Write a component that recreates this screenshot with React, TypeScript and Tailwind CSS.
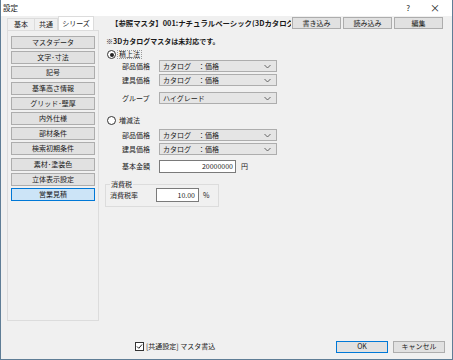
import React from "react";

const font = { fontFamily: '"Noto Sans CJK JP", "Noto Sans", sans-serif' };

const menus = [
  "マスタデータ",
  "文字･寸法",
  "記号",
  "基準高さ情報",
  "グリッド･壁厚",
  "内外仕様",
  "部材条件",
  "検索初期条件",
  "素材･塗装色",
  "立体表示設定",
  "営業見積",
];

const Chevron = () => (
  <svg width="7" height="5" viewBox="0 0 7 5" className="shrink-0">
    <path d="M0.5 1 L3.5 4 L6.5 1" fill="none" stroke="#555" strokeWidth="0.9" />
  </svg>
);

const Select = ({ value }: { value: string }) => (
  <div className="w-[118px] h-[12px] flex items-center justify-between border border-[#adadad] bg-[#e5e5e5] pl-[3px] pr-[5px]">
    <span className="leading-none">{value}</span>
    <Chevron />
  </div>
);

const Row = ({ label, children }: { label: string; children: React.ReactNode }) => (
  <div className="flex items-center">
    <span className="w-[54px] shrink-0 pl-[17px] leading-none">{label}</span>
    {children}
  </div>
);

const Radio = ({ checked, label, focus }: { checked?: boolean; label: string; focus?: boolean }) => (
  <div className="flex items-center gap-[2px] pl-[2px]">
    <span className="w-[9px] h-[9px] rounded-full border border-[#333] bg-white flex items-center justify-center">
      {checked && <span className="w-[4px] h-[4px] rounded-full bg-[#222]" />}
    </span>
    <span className={`leading-none px-[1px] ${focus ? "outline outline-1 outline-dotted outline-[#999]" : ""}`}>{label}</span>
  </div>
);

const Btn = ({ label, className = "" }: { label: string; className?: string }) => (
  <div className={`h-[12px] flex items-center justify-center border bg-[#e1e1e1] leading-none ${className}`}>{label}</div>
);

export default function App() {
  return (
    <div style={font} className="w-[453px] h-[360px] bg-[#f0f0f0] border-x border-b border-[#5f7d96] flex flex-col text-[7px] text-[#1a1a1a]">
      {/* title bar */}
      <div className="h-[16px] bg-white flex items-center pl-[2px] pr-[12px] shrink-0">
        <span className="text-[7.5px] leading-none">設定</span>
        <span className="ml-auto text-[8px] leading-none">?</span>
        <span className="ml-[20px] text-[10px] leading-none">×</span>
      </div>

      <div className="flex h-[305px] shrink-0">
        {/* left tab control */}
        <div className="ml-[6px] w-[92px] shrink-0 flex flex-col">
          <div className="h-[14px] flex items-end">
            <div className="h-[12px] w-[28px] flex items-center justify-center border border-b-0 border-[#dcdcdc] leading-none">基本</div>
            <div className="h-[12px] w-[23px] flex items-center justify-center border-t border-r border-[#dcdcdc] leading-none">共通</div>
            <div className="h-[14px] w-[36px] flex items-center justify-center bg-white border border-b-0 border-[#dcdcdc] leading-none">シリーズ</div>
          </div>
          <div className="h-[291px] border border-[#dcdcdc] px-[3px] pt-[5px] flex flex-col gap-[2.2px]">
            {menus.map((m, i) => (
              <div
                key={m}
                className={`h-[13px] flex items-center justify-center border leading-none ${
                  i === menus.length - 1 ? "bg-[#cce4f7] border-[#0078d7]" : "bg-[#e1e1e1] border-[#adadad]"
                }`}
              >
                {m}
              </div>
            ))}
          </div>
        </div>

        {/* right pane */}
        <div className="ml-[6px] flex-1 min-w-0 pr-[9px] flex flex-col">
          <div className="mt-[1px] h-[12px] flex items-center">
            <span className="flex-1 min-w-0 pl-[6px] overflow-hidden whitespace-nowrap font-bold text-[7.4px] leading-none">
              【参照マスタ】001:ナチュラルベーシック(3Dカタログ版)
            </span>
            <div className="flex gap-[2px] ml-[1px] shrink-0">
              <Btn label="書き込み" className="w-[49px] border-[#adadad]" />
              <Btn label="読み込み" className="w-[49px] border-[#adadad]" />
              <Btn label="編集" className="w-[49px] border-[#adadad]" />
            </div>
          </div>

          <div className="mt-[9px] pl-[1px] font-bold leading-none">※3Dカタログマスタは未対応です。</div>

          <div className="mt-[5px]">
            <Radio checked focus label="積上法" />
          </div>
          <div className="mt-[1px] flex flex-col gap-[2px]">
            <Row label="部品価格">
              <Select value="カタログ　：価格" />
            </Row>
            <Row label="建具価格">
              <Select value="カタログ　：価格" />
            </Row>
          </div>
          <div className="mt-[6px]">
            <Row label="グループ">
              <Select value="ハイグレード" />
            </Row>
          </div>

          <div className="mt-[12px]">
            <Radio label="増減法" />
          </div>
          <div className="mt-[4px] flex flex-col gap-[2px]">
            <Row label="部品価格">
              <Select value="カタログ　：価格" />
            </Row>
            <Row label="建具価格">
              <Select value="カタログ　：価格" />
            </Row>
          </div>
          <div className="mt-[5px]">
            <Row label="基本金額">
              <div className="w-[77px] h-[13px] border border-[#7a7a7a] bg-white flex items-center justify-end pr-[2px] leading-none">20000000</div>
              <span className="ml-[5px] leading-none">円</span>
            </Row>
          </div>

          <fieldset className="mt-[8px] w-[114px] border border-[#dcdcdc] px-[4px] pb-[4px] pt-[0px]">
            <legend className="px-[1px] leading-none">消費税</legend>
            <div className="flex items-center">
              <span className="w-[46px] leading-none">消費税率</span>
              <div className="w-[43px] h-[14px] border border-[#7a7a7a] bg-white flex items-center justify-end pr-[3px] leading-none">10.00</div>
              <span className="ml-[4px] leading-none">%</span>
            </div>
          </fieldset>
        </div>
      </div>

      {/* bottom bar */}
      <div className="mt-[20px] flex items-center h-[11px]">
        <div className="ml-[134px] flex items-center gap-[2px]">
          <span className="w-[9px] h-[9px] border border-[#333] bg-white flex items-center justify-center">
            <svg width="7" height="7" viewBox="0 0 7 7">
              <path d="M1 3.5 L2.8 5.3 L6 1.5" fill="none" stroke="#222" strokeWidth="1" />
            </svg>
          </span>
          <span className="leading-none">[共通設定] マスタ書込</span>
        </div>
        <Btn label="OK" className="ml-auto w-[52px] border-[#0078d7]" />
        <Btn label="キャンセル" className="ml-[5px] mr-[7px] w-[52px] border-[#adadad]" />
      </div>
    </div>
  );
}
